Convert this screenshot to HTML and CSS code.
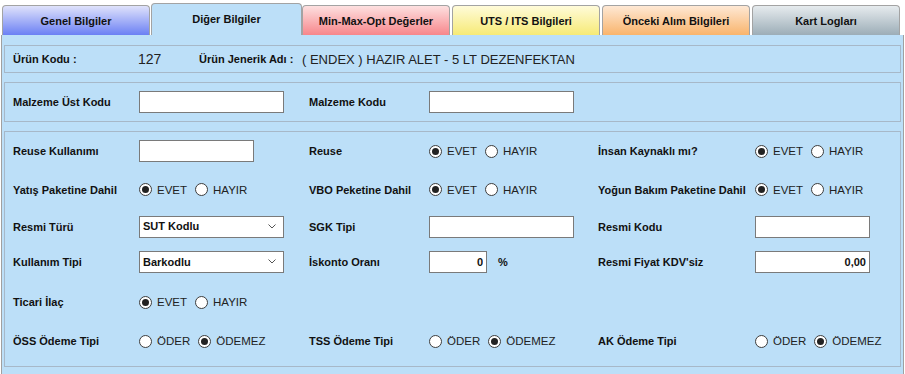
FILE: index.html
```html
<!DOCTYPE html>
<html lang="tr">

<head>
    <meta charset="utf-8">
    <title>Ürün Kartı - Diğer Bilgiler</title>
    <link rel="stylesheet" href="styles.css">
</head>

<body>
    <div class="page">
        <div class="tabs">
            <div class="tab tab-blue">Genel Bilgiler</div>
            <div class="tab active">Diğer Bilgiler</div>
            <div class="tab tab-red">Min-Max-Opt Değerler</div>
            <div class="tab tab-yellow">UTS / ITS Bilgileri</div>
            <div class="tab tab-orange">Önceki Alım Bilgileri</div>
            <div class="tab tab-grey">Kart Logları</div>
        </div>

        <div class="panel">
            <div class="box product">
                <span class="label product-label">Ürün Kodu :</span>
                <span class="product-value code">127</span>
                <span class="label generic-label">Ürün Jenerik Adı :</span>
                <span class="product-value generic">( ENDEX ) HAZIR ALET - 5 LT DEZENFEKTAN</span>
            </div>

            <div class="box grid material">
                <label class="label" for="ust-kod">Malzeme Üst Kodu</label>
                <div><input type="text" class="field w-lg" id="ust-kod"></div>
                <label class="label" for="malzeme-kod">Malzeme Kodu</label>
                <div><input type="text" class="field w-lg" id="malzeme-kod"></div>
            </div>

            <div class="box grid details">
                <!-- row 1 -->
                <label class="label" for="reuse-kul">Reuse Kullanımı</label>
                <div><input type="text" class="field w-sm" id="reuse-kul"></div>
                <span class="label">Reuse</span>
                <div class="radios">
                    <label><input type="radio" name="reuse" checked>EVET</label>
                    <label><input type="radio" name="reuse">HAYIR</label>
                </div>
                <span class="label">İnsan Kaynaklı mı?</span>
                <div class="radios">
                    <label><input type="radio" name="insan" checked>EVET</label>
                    <label><input type="radio" name="insan">HAYIR</label>
                </div>

                <!-- row 2 -->
                <span class="label">Yatış Paketine Dahil</span>
                <div class="radios">
                    <label><input type="radio" name="yatis" checked>EVET</label>
                    <label><input type="radio" name="yatis">HAYIR</label>
                </div>
                <span class="label">VBO Peketine Dahil</span>
                <div class="radios">
                    <label><input type="radio" name="vbo" checked>EVET</label>
                    <label><input type="radio" name="vbo">HAYIR</label>
                </div>
                <span class="label">Yoğun Bakım Paketine Dahil</span>
                <div class="radios">
                    <label><input type="radio" name="yogun" checked>EVET</label>
                    <label><input type="radio" name="yogun">HAYIR</label>
                </div>

                <!-- row 3 -->
                <span class="label">Resmi Türü</span>
                <div class="select w-lg">
                    <span>SUT Kodlu</span>
                    <svg width="8" height="5" viewBox="0 0 8 5"><path d="M0.5 0.5 L4 4 L7.5 0.5" fill="none" stroke="#555" stroke-width="1"/></svg>
                </div>
                <label class="label" for="sgk">SGK Tipi</label>
                <div><input type="text" class="field w-lg" id="sgk"></div>
                <label class="label" for="resmi-kod">Resmi Kodu</label>
                <div><input type="text" class="field w-sm" id="resmi-kod"></div>

                <!-- row 4 -->
                <span class="label">Kullanım Tipi</span>
                <div class="select w-lg">
                    <span>Barkodlu</span>
                    <svg width="8" height="5" viewBox="0 0 8 5"><path d="M0.5 0.5 L4 4 L7.5 0.5" fill="none" stroke="#555" stroke-width="1"/></svg>
                </div>
                <label class="label" for="iskonto">İskonto Oranı</label>
                <div class="inline">
                    <input type="text" class="field w-xs num" id="iskonto" value="0">
                    <span class="label percent">%</span>
                </div>
                <label class="label" for="fiyat">Resmi Fiyat KDV'siz</label>
                <div><input type="text" class="field w-sm num" id="fiyat" value="0,00"></div>

                <!-- row 5 -->
                <span class="label">Ticari İlaç</span>
                <div class="radios">
                    <label><input type="radio" name="ticari" checked>EVET</label>
                    <label><input type="radio" name="ticari">HAYIR</label>
                </div>
                <span></span><span></span><span></span><span></span>

                <!-- row 6 -->
                <span class="label">ÖSS Ödeme Tipi</span>
                <div class="radios">
                    <label><input type="radio" name="oss">ÖDER</label>
                    <label><input type="radio" name="oss" checked>ÖDEMEZ</label>
                </div>
                <span class="label">TSS Ödeme Tipi</span>
                <div class="radios">
                    <label><input type="radio" name="tss">ÖDER</label>
                    <label><input type="radio" name="tss" checked>ÖDEMEZ</label>
                </div>
                <span class="label">AK Ödeme Tipi</span>
                <div class="radios">
                    <label><input type="radio" name="ak">ÖDER</label>
                    <label><input type="radio" name="ak" checked>ÖDEMEZ</label>
                </div>
            </div>
        </div>
    </div>
</body>

</html>
```

FILE: styles.css
```css
* {
    margin: 0;
    padding: 0;
    box-sizing: border-box;
}

body {
    background: #ffffff;
    color: #000000;
    font-family: "Liberation Sans", Arial, sans-serif;
    overflow: hidden;
}

.page {
    width: 905px;
    padding-left: 1px;
}

/* tabs */

.tabs {
    display: flex;
    align-items: flex-end;
    height: 35px;
    padding-left: 1px;
}

.tab {
    width: 148px;
    height: 30px;
    margin-right: 2px;
    border: 1px solid #a3a3a3;
    border-bottom: none;
    border-radius: 4px 4px 0 0;
    display: flex;
    align-items: center;
    justify-content: center;
    font-size: 11px;
    font-weight: bold;
    color: #111;
}

.tab.active {
    width: 151px;
    height: 32px;
    margin-left: -1px;
    margin-right: 0;
    padding-bottom: 2px;
    background: #bcdff8;
}

.tab-blue {
    background: linear-gradient(#dfe2fb, #6b80f4);
}

.tab-red {
    background: linear-gradient(#fde0e0, #f7868b);
}

.tab-yellow {
    background: linear-gradient(#fffbd9, #f6ea76);
}

.tab-orange {
    background: linear-gradient(#fee8d4, #f9b46c);
}

.tab-grey {
    background: linear-gradient(#e6ebee, #9cadb7);
}

/* panel */

.panel {
    background: #bcdff8;
    border: 1px solid #a0a0a0;
    border-top: none;
    width: 903px;
    height: 345px;
    padding: 10px 2px 0;
}

.box {
    border: 1px solid #a7b8c8;
    margin-bottom: 9px;
}

.label {
    font-size: 11px;
    font-weight: bold;
    color: #111;
}

.product {
    height: 28px;
    display: flex;
    align-items: center;
    padding-left: 8px;
}

.product-label {
    width: 125px;
}

.generic-label {
    width: 103px;
}

.product-value {
    font-size: 14px;
    color: #222;
}

.product-value.code {
    width: 61px;
}

.product-value.generic {
    font-size: 13px;
}

.grid {
    display: grid;
    grid-template-columns: 126px 170px 120px 169px 157px 1fr;
    align-items: center;
    padding-left: 8px;
}

.material {
    height: 40px;
}

.details {
    height: 236px;
    grid-template-rows: 38px 39px 35px 36px 44px 34px;
    align-content: start;
}

/* controls */

.field {
    display: block;
    height: 22px;
    border: 1px solid #7a7a7a;
    background: #ffffff;
    padding: 0 3px;
    font-family: "Liberation Sans", Arial, sans-serif;
    font-size: 11px;
    font-weight: bold;
    color: #111;
    outline: none;
}

.num {
    text-align: right;
}

.w-lg {
    width: 145px;
}

.w-sm {
    width: 115px;
}

.w-xs {
    width: 58px;
}

.select {
    height: 22px;
    border: 1px solid #7a7a7a;
    background: #ffffff;
    display: flex;
    align-items: center;
    justify-content: space-between;
    padding: 0 7px 1px 3px;
    font-size: 11px;
    font-weight: bold;
    color: #111;
}

.inline {
    display: flex;
    align-items: center;
}

.percent {
    margin-left: 11px;
}

.radios {
    display: flex;
    align-items: center;
    font-size: 11.5px;
    color: #222;
}

.radios label {
    display: flex;
    align-items: center;
    margin-right: 8px;
}

input[type="radio"] {
    appearance: none;
    width: 13px;
    height: 13px;
    border: 1px solid #3d3d3d;
    border-radius: 50%;
    background: #ffffff;
    margin: 0 5px 0 0;
    display: grid;
    place-content: center;
}

input[type="radio"]:checked::before {
    content: "";
    width: 7px;
    height: 7px;
    border-radius: 50%;
    background: #222;
}
```
